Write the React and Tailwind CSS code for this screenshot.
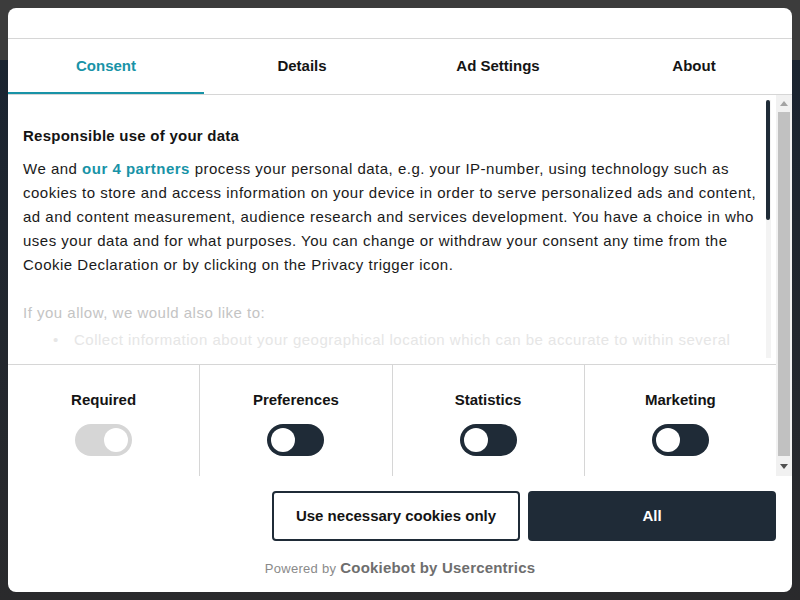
export default function App() {
  const font = { fontFamily: '"Liberation Sans", Arial, sans-serif' };
  const Toggle = ({ disabled }) => (
    <div
      className={`w-[57px] h-8 rounded-full flex items-center px-1 ${disabled ? 'bg-[#d6d6d6] justify-end' : 'bg-[#1f2b37] justify-start'}`}
    >
      <div className="w-6 h-6 rounded-full bg-white" />
    </div>
  );
  const cols = [
    { label: 'Required', disabled: true },
    { label: 'Preferences' },
    { label: 'Statistics' },
    { label: 'Marketing' },
  ];
  return (
    <div className="relative w-[800px] h-[600px] overflow-hidden bg-[#1c2530]" style={font}>
      <div className="h-[60px] bg-[#3c3c3c]" />
      <div className="h-[540px] bg-gradient-to-b from-[#1a2430] to-[#2a2a2c]" />
      <div className="absolute inset-2 bg-white rounded-lg flex flex-col overflow-hidden">
        <div className="h-[31px] border-b border-[#d6d6d6] shrink-0" />
        <div className="flex h-[56px] border-b border-[#d6d6d6] shrink-0">
          {['Consent', 'Details', 'Ad Settings', 'About'].map((t, i) => (
            <div
              key={t}
              className={`flex-1 flex items-center justify-center text-[15px] font-bold ${i === 0 ? 'text-[#1893a7] border-b-2 border-[#1893a7]' : 'text-[#141414]'}`}
            >
              <span className={i === 0 ? 'pt-[2px]' : ''}>{t}</span>
            </div>
          ))}
        </div>
        <div className="flex h-[381px] shrink-0">
          <div className="flex-1 flex flex-col">
            <div className="relative h-[270px] border-b border-[#d6d6d6] overflow-hidden pl-[15px] pt-[29px]">
              <div className="text-[15px] leading-6 font-bold text-[#141414] tracking-[0.25px]">Responsible use of your data</div>
              <div className="mt-[9px] text-[15px] leading-6 text-[#1a1a1a] whitespace-nowrap tracking-[0.5px]">
                <div>
                  We and <span className="font-bold text-[#1893a7]">our 4 partners</span> process your personal data, e.g. your IP-number, using technology such as
                </div>
                <div>cookies to store and access information on your device in order to serve personalized ads and content,</div>
                <div>ad and content measurement, audience research and services development. You have a choice in who</div>
                <div>uses your data and for what purposes. You can change or withdraw your consent any time from the</div>
                <div>Cookie Declaration or by clicking on the Privacy trigger icon.</div>
              </div>
              <div className="mt-6 text-[15px] leading-6 text-[#c4c4c4] whitespace-nowrap tracking-[0.5px]">If you allow, we would also like to:</div>
              <div className="mt-[3px] flex text-[15px] leading-6 text-[#e6e6e6] whitespace-nowrap pl-[30px] tracking-[0.5px]">
                <span className="w-[21px]">•</span>
                <span>Collect information about your geographical location which can be accurate to within several</span>
              </div>
              <div className="absolute right-[5px] top-[5px] w-[5px] h-[258px] bg-[#f3f3f3]">
                <div className="w-[4px] h-[120px] bg-[#1f2b37] rounded-sm" />
              </div>
            </div>
            <div className="flex-1 flex">
              {cols.map((c, i) => (
                <div
                  key={c.label}
                  className={`flex-1 flex flex-col items-center pt-[26px] ${i > 0 ? 'border-l border-[#d6d6d6]' : ''}`}
                >
                  <div className="text-[15px] leading-[18px] font-bold text-[#141414]">{c.label}</div>
                  <div className="mt-[15px]">
                    <Toggle disabled={c.disabled} />
                  </div>
                </div>
              ))}
            </div>
          </div>
          <div className="w-[16px] bg-[#f1f1f1] flex flex-col items-center">
            <div className="h-[17px] w-full flex items-center justify-center">
              <svg width="8" height="5" viewBox="0 0 8 5"><path d="M0 5 L4 0 L8 5 Z" fill="#a3a3a3" /></svg>
            </div>
            <div className="w-[12px] h-[344px] bg-[#c1c1c1]" />
            <div className="flex-1 w-full flex items-center justify-center">
              <svg width="8" height="5" viewBox="0 0 8 5"><path d="M0 0 L8 0 L4 5 Z" fill="#505050" /></svg>
            </div>
          </div>
        </div>
        <div className="flex justify-end gap-2 pr-4 pt-[15px]">
          <button className="w-[248px] h-[50px] border-2 border-[#1f2b37] rounded text-[15px] font-bold text-[#141414] bg-white">
            Use necessary cookies only
          </button>
          <button className="w-[248px] h-[50px] rounded bg-[#1f2b37] text-[15px] font-bold text-white">All</button>
        </div>
        <div className="flex items-baseline justify-center mt-[16px] text-[#8a8a8a]">
          <span className="text-[13px] tracking-[0.3px]">Powered by&nbsp;</span>
          <span className="text-[15px] font-bold text-[#6e6e6e] tracking-[0.2px]">Cookiebot by Usercentrics</span>
        </div>
      </div>
    </div>
  );
}
